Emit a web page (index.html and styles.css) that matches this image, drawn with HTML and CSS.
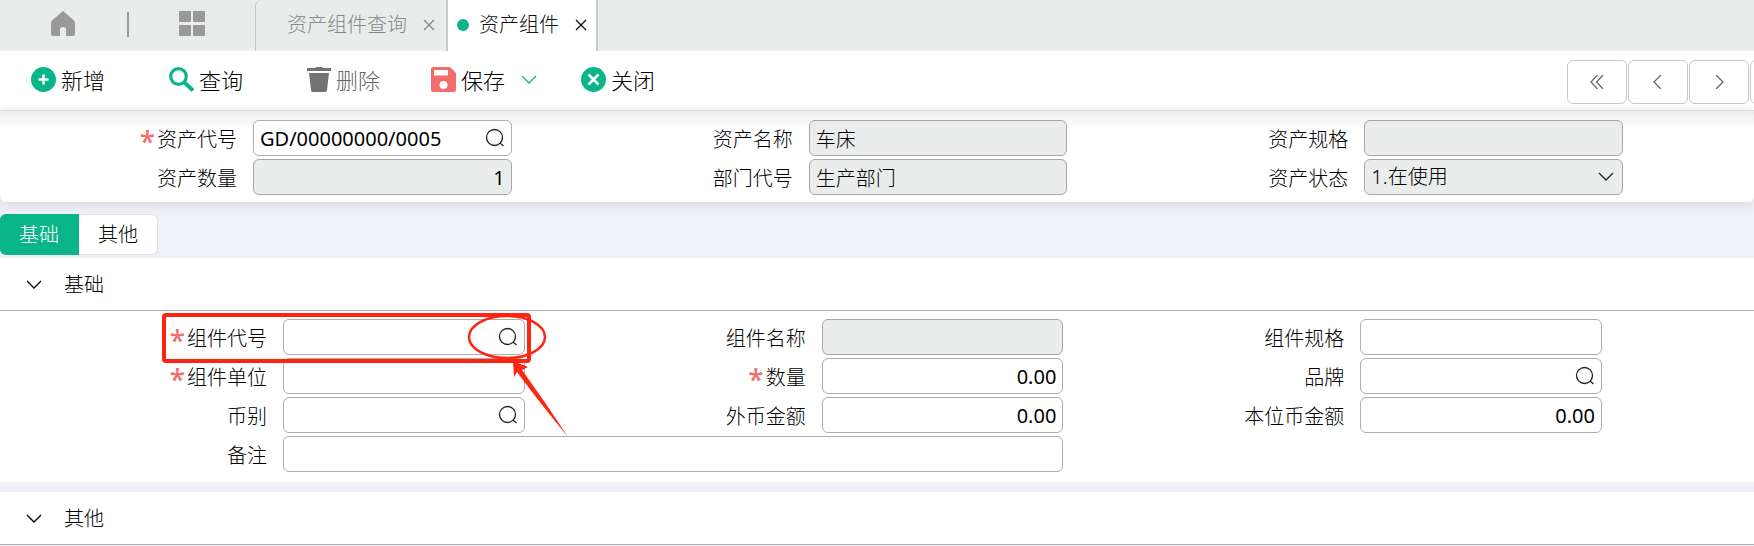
FILE: index.html
```html
<!DOCTYPE html>
<html lang="zh-CN">
<head>
<meta charset="utf-8">
<title>资产组件</title>
<link rel="stylesheet" href="styles.css">
</head>
<body>
<svg class="sprite" aria-hidden="true">
  <symbol id="close" viewBox="0 0 12 12"><path d="M1 1l10 10M11 1L1 11"/></symbol>
  <symbol id="down" viewBox="0 0 16 10"><path d="M1 1l7 7 7-7"/></symbol>
  <symbol id="search" viewBox="0 0 20 20"><circle cx="9.500" cy="9.500" r="8"/><path d="M15 15l3.500 3"/></symbol>
</svg>

<header class="topbar">
  <button class="home" type="button" aria-label="首页"><svg width="24" height="26" viewBox="0 0 24 26"><path d="M12 0L23 9.500Q24 10.500 24 12V23Q24 25 22 25H15V18.500Q15 16 12 16T9 18.500V25H2Q0 25 0 23V12Q0 10.500 1 9.500Z"/></svg></button>
  <span class="divider"></span>
  <button class="apps" type="button" aria-label="菜单"><svg width="26" height="25" viewBox="0 0 26 25"><rect width="12" height="11" rx="1"/><rect x="14" width="12" height="11" rx="1"/><rect y="14" width="12" height="11" rx="1"/><rect x="14" y="14" width="12" height="11" rx="1"/></svg></button>
  <nav class="pages">
    <div class="page"><a href="#query">资产组件查询</a><button type="button" aria-label="关闭资产组件查询"><svg class="line" width="12" height="12"><use href="#close"/></svg></button></div>
    <div class="page page-active"><span class="dot"></span><a href="#component">资产组件</a><button type="button" aria-label="关闭资产组件"><svg class="line" width="12" height="12"><use href="#close"/></svg></button></div>
  </nav>
</header>

<div class="toolbar">
  <div class="actions">
    <button class="action" type="button"><svg width="25" height="25" viewBox="0 0 25 25"><circle cx="12.500" cy="12.500" r="12.500" fill="#0ab58a"/><path d="M12.500 7.500v10M7.500 12.500h10" stroke="#fff" stroke-width="2.500"/></svg>新增</button>
    <button class="action" type="button"><svg width="25" height="25" viewBox="0 0 25 25" fill="none" stroke="#0ab58a"><circle cx="9.500" cy="9.500" r="7.800" stroke-width="3.200"/><path d="M15 15l9 8.500" stroke-width="4"/></svg>查询</button>
    <button class="action action-off" type="button" disabled><svg width="24" height="25" viewBox="0 0 24 25" fill="#737373"><path d="M0 1H8L9 0H15L16 1H24V4H0ZM2 6H22L20 23Q20 25 18 25H6Q4 25 4 23Z"/></svg>删除</button>
    <div class="split">
      <button class="action" type="button"><svg width="25" height="25" viewBox="0 0 25 25"><path d="M2 0H19L25 6V23Q25 25 23 25H2Q0 25 0 23V2Q0 0 2 0Z" fill="#f56c6c"/><path d="M3 3H17V8.500H3Z" fill="#fff"/><circle cx="12.500" cy="18" r="4" fill="#fff"/></svg>保存</button>
      <button class="more" type="button" aria-label="更多保存选项"><svg class="line" width="16" height="10"><use href="#down"/></svg></button>
    </div>
    <button class="action" type="button"><svg width="25" height="25" viewBox="0 0 25 25"><circle cx="12.500" cy="12.500" r="12.500" fill="#0ab58a"/><path d="M7.500 7.500l10 10M17.500 7.500l-10 10" stroke="#fff" stroke-width="2.500"/></svg>关闭</button>
  </div>
  <div class="pager">
    <button type="button" aria-label="第一条"><svg class="line" width="14" height="14" viewBox="0 0 14 14"><path d="M7.500 0L1 7l6.500 7M13 0L6.500 7l6.500 7"/></svg></button>
    <button type="button" aria-label="上一条"><svg class="line" width="14" height="14" viewBox="0 0 14 14"><path d="M10 0L3 7l7 7"/></svg></button>
    <button type="button" aria-label="下一条"><svg class="line" width="14" height="14" viewBox="0 0 14 14"><path d="M4 0l7 7-7 7"/></svg></button>
    <button type="button" aria-label="最后一条"><svg class="line" width="14" height="14" viewBox="0 0 14 14"><path d="M1 0l6.500 7L1 14M6.500 0L13 7l-6.500 7"/></svg></button>
  </div>
</div>

<form class="summary">
  <div class="cell"><label for="asset-code" class="required">资产代号</label><div class="field"><input id="asset-code" class="code" value="GD/00000000/0005"><svg class="line lookup" width="20" height="20"><use href="#search"/></svg></div></div>
  <div class="cell"><label for="asset-name">资产名称</label><div class="field"><input id="asset-name" value="车床" readonly></div></div>
  <div class="cell"><label for="asset-spec">资产规格</label><div class="field"><input id="asset-spec" readonly></div></div>
  <div class="cell"><label for="asset-count">资产数量</label><div class="field"><input id="asset-count" class="number" value="1" readonly></div></div>
  <div class="cell"><label for="department">部门代号</label><div class="field"><input id="department" value="生产部门" readonly></div></div>
  <div class="cell"><label for="status">资产状态</label><div class="field"><select id="status" disabled><option>1.在使用</option></select><svg class="line arrow" width="16" height="10"><use href="#down"/></svg></div></div>
</form>

<nav class="tabs">
  <button class="tab tab-active" type="button">基础</button>
  <button class="tab" type="button">其他</button>
</nav>

<section class="panel">
  <h2><button type="button"><svg class="line" width="16" height="10"><use href="#down"/></svg>基础</button></h2>
  <form class="details">
    <div class="cell"><label for="part-code" class="required">组件代号</label><div class="field"><input id="part-code"><svg class="line lookup" width="20" height="20"><use href="#search"/></svg>
      <svg class="callout" width="410" height="130" viewBox="0 0 410 130" aria-hidden="true"><rect x="3" y="3" width="365" height="46" rx="2" fill="none" stroke="#fd2410" stroke-width="4"/><ellipse cx="346" cy="25" rx="38" ry="21" fill="none" stroke="#fd2410" stroke-width="2.500"/><path d="M352 49L367 55L361 58Q385 91 407 125Q379 91 356 60L353 65Z" fill="#fd2410"/></svg></div></div>
    <div class="cell"><label for="part-name">组件名称</label><div class="field"><input id="part-name" readonly></div></div>
    <div class="cell"><label for="part-spec">组件规格</label><div class="field"><input id="part-spec"></div></div>
    <div class="cell"><label for="unit" class="required">组件单位</label><div class="field"><input id="unit"></div></div>
    <div class="cell"><label for="quantity" class="required">数量</label><div class="field"><input id="quantity" class="number" value="0.00"></div></div>
    <div class="cell"><label for="brand">品牌</label><div class="field"><input id="brand"><svg class="line lookup" width="20" height="20"><use href="#search"/></svg></div></div>
    <div class="cell"><label for="currency">币别</label><div class="field"><input id="currency"><svg class="line lookup" width="20" height="20"><use href="#search"/></svg></div></div>
    <div class="cell"><label for="foreign">外币金额</label><div class="field"><input id="foreign" class="number" value="0.00"></div></div>
    <div class="cell"><label for="local">本位币金额</label><div class="field"><input id="local" class="number" value="0.00"></div></div>
    <div class="cell wide"><label for="remark">备注</label><div class="field"><input id="remark"></div></div>
  </form>
</section>

<section class="panel">
  <h2><button type="button"><svg class="line" width="16" height="10"><use href="#down"/></svg>其他</button></h2>
</section>
</body>
</html>
```
FILE: styles.css
```css
* { box-sizing: border-box; }
body {
  margin: 0;
  background: #eff1f6;
  color: #000;
  font: 300 20px/28px "Noto Sans", "Noto Sans CJK SC", sans-serif;
  overflow-x: hidden;
}
button, input, select { margin: 0; font: inherit; color: inherit; }
button { padding: 0; border: 0; background: none; }
svg { display: block; flex: none; }
.sprite { position: absolute; width: 0; height: 0; }
.line { fill: none; stroke: currentColor; stroke-width: 1.3; }

.topbar {
  display: flex;
  align-items: center;
  height: 51px;
  padding-left: 51px;
  background: #e8ecea;
  border-bottom: 2px solid #eef0f4;
}
.home, .apps { padding-bottom: 2px; fill: #999; }
.divider { width: 2px; height: 25px; margin: 0 50px 0 52px; background: #999; }
.pages { display: flex; align-self: stretch; margin: 0 0 -2px 50px; }
.page {
  display: flex;
  align-items: center;
  gap: 16px;
  padding: 0 11px 2px 31px;
  border-left: 1px solid #c0c4cc;
  border-radius: 6px 0 0 0;
  color: #888;
}
.page a { color: inherit; text-decoration: none; }
.page-active {
  padding: 0 9px 2px;
  background: #fff;
  color: #111;
  border-right: 2px solid #c8cacc;
  border-left: 2px solid #c8cacc;
  border-radius: 0;
}
.dot { width: 12px; height: 12px; margin-right: -6px; border-radius: 50%; background: #0ab58a; }

.toolbar {
  display: flex;
  align-items: center;
  justify-content: space-between;
  height: 60px;
  padding-left: 31px;
  background: #fff;
  border-bottom: 1px solid #dcdde6;
}
.actions { display: flex; align-items: center; gap: 64px; padding-bottom: 2px; }
.action { display: flex; align-items: center; gap: 5px; font-size: 22px; line-height: 32px; }
.action-off { margin-right: -13px; color: #666; }
.split { display: flex; align-items: center; gap: 16px; margin-right: -20px; }
.more { color: #0ab58a; }
.pager { display: flex; gap: 1px; width: 187px; padding-top: 2px; overflow: hidden; }
.pager button {
  display: grid;
  place-items: center;
  flex: 0 0 60px;
  height: 44px;
  border: 1px solid #c8c8c8;
  border-radius: 6px;
  color: #666;
}

.summary, .details { display: grid; grid-template-columns: repeat(3, 1fr); row-gap: 3px; }
.summary {
  padding: 9px 87px 7px 0;
  background: linear-gradient(#eee, #fff 20px);
  border-radius: 6px;
  box-shadow: 0 2px 12px #d4d6da;
}
.details { padding: 8px 138px 10px 0; }
.cell { display: flex; align-items: center; gap: 16px; padding-right: 44px; }
.details .cell { padding-right: 14px; }
.cell label { flex: 0 0 237px; padding-top: 4px; text-align: right; }
.details .cell label { flex-basis: 267px; }
.wide { grid-column: span 2; }
.required::before {
  content: "*";
  margin-right: 2px;
  color: #f56c6c;
  font: 500 28px/20px "Noto Sans", sans-serif;
  vertical-align: -5px;
}
.field { position: relative; flex: 1; min-width: 0; }
.field input, .field select {
  display: block;
  width: 100%;
  height: 36px;
  padding: 0 6px;
  border: 1px solid #adadad;
  border-radius: 6px;
  background: #fff;
  outline: 0;
}
.field input:read-only, .field select { background: #ebedec; border-color: #a5a7a6; }
.field select { appearance: none; opacity: 1; color: #000; }
.field .code, .field .number { font-weight: 400; }
.field .number { text-align: right; }
.lookup, .arrow { position: absolute; right: 7px; top: 8px; color: #222; pointer-events: none; }
.arrow { right: 9px; top: 13px; }
.callout { position: absolute; left: -122px; top: -7px; z-index: 1; pointer-events: none; }

.tabs { display: flex; padding: 12px 0 3px; }
.tab {
  width: 79px;
  height: 41px;
  padding-top: 1px;
  background: #fff;
  border: 1px solid #dfe1e6;
  border-left: 0;
  border-radius: 0 6px 6px 0;
}
.tab-active { background: #0ab58a; border-color: #0ab58a; color: #fff; border-radius: 6px 0 0 6px; }

.panel { margin-bottom: 10px; background: #fff; }
.panel h2 { margin: 0; font: inherit; border-bottom: 1px solid #adadad; }
.panel h2 button { display: flex; align-items: center; gap: 22px; height: 52px; padding: 2px 0 0 26px; }
```
